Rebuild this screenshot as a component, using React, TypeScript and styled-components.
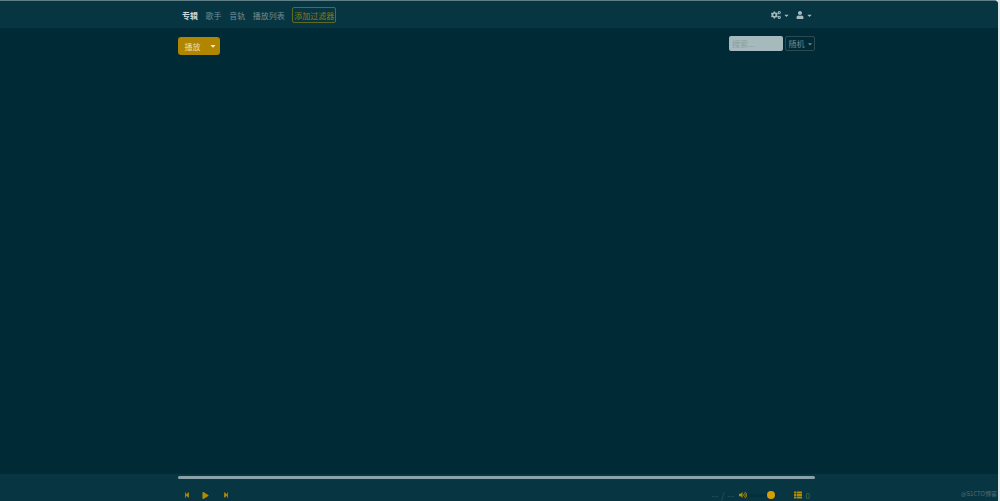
import styled, { createGlobalStyle } from "styled-components";
import { FaCaretDown, FaCogs, FaPlay, FaStepBackward, FaStepForward, FaThList, FaUser, FaVolumeUp } from "react-icons/fa";

const GlobalStyle = createGlobalStyle`
  html, body {
    margin: 0;
    height: 100%;
    background: #dfe9ec;
    overflow: hidden;
  }
  * {
    box-sizing: border-box;
  }
`;

const Shell = styled.div`
  width: 998px;
  height: 501px;
  display: flex;
  flex-direction: column;
  background: #002b36;
  border-top: 1px solid #5f7e86;
  border-top-right-radius: 4px;
  overflow: hidden;
  font-family: "Noto Sans CJK SC", "Noto Sans", sans-serif;
  font-size: 8px;
`;

const Navbar = styled.nav`
  height: 27px;
  padding: 1px 185px 0 182px;
  display: flex;
  align-items: center;
  background: #073642;
`;

const NavLink = styled.span<{ $active?: boolean }>`
  margin-right: 7.6px;
  color: ${({ $active }) => ($active ? "#ccd8da" : "#6f8c93")};
  font-weight: ${({ $active }) => ($active ? 700 : 400)};
`;

const FilterButton = styled.button`
  height: 16px;
  width: 44px;
  margin-left: -0.2px;
  padding: 0;
  border: 1px solid #5f6a22;
  border-radius: 2px;
  background: transparent;
  color: #8a7c16;
  font: inherit;
`;

const NavRight = styled.div`
  margin-left: auto;
  display: flex;
  align-items: center;
  gap: 6px;
  color: #a7bbbf;
`;

const NavMenu = styled.span`
  display: flex;
  align-items: center;
  gap: 2px;
`;

const Main = styled.main`
  flex: 1;
  padding: 8px 183px 0 178px;
`;

const Toolbar = styled.div`
  display: flex;
  align-items: flex-start;
  justify-content: space-between;
`;

const SplitButton = styled.div`
  width: 42px;
  height: 18px;
  margin-top: 1px;
  display: flex;
  border-radius: 3px;
  overflow: hidden;
  background: #b08600;
  color: #e8dcae;
  box-shadow: 0 0 1px rgba(0, 0, 0, 0.4);
`;

const PlayLabel = styled.span`
  width: 28px;
  padding: 1px 0 0 1px;
  text-align: center;
  line-height: 18px;
`;

const CaretBox = styled.span`
  flex: 1;
  display: flex;
  align-items: center;
  justify-content: center;
  color: #f4e9c4;
`;

const ToolbarRight = styled.div`
  display: flex;
  align-items: center;
  gap: 2px;
`;

const SearchBox = styled.input`
  width: 54px;
  height: 15px;
  margin-left: 1px;
  padding: 0 3px;
  border: 0;
  border-radius: 2px;
  background: #a6b9bc;
  font: inherit;
  &::placeholder {
    color: #8a9ea2;
    opacity: 1;
  }
`;

const SortButton = styled.span`
  width: 30px;
  height: 15px;
  display: flex;
  align-items: center;
  justify-content: center;
  gap: 2px;
  padding-left: 1px;
  border: 1px solid #2c4a52;
  border-radius: 2px;
  color: #6f8c93;
`;

const Player = styled.footer`
  height: 27px;
  padding: 2px 183px 0 178px;
  position: relative;
  background: #073642;
`;

const Progress = styled.div`
  height: 3px;
  border-radius: 2px;
  background: #8aa3a8;
`;

const Controls = styled.div`
  display: flex;
  align-items: center;
  height: 20px;
  margin-top: 6px;
  color: #b58900;
`;

const TransportIcon = styled.span<{ $gap: number }>`
  display: flex;
  margin-left: ${({ $gap }) => $gap}px;
`;

const Time = styled.span`
  margin-left: auto;
  width: 20px;
  white-space: nowrap;
  color: #35555d;
  font-size: 9px;
  letter-spacing: 0.4px;
`;

const VolumeTrack = styled.div`
  width: 29px;
  height: 3px;
  margin: 0 17px 0 1px;
  position: relative;
  background: #05303b;
`;

const VolumeKnob = styled.span`
  position: absolute;
  top: -3px;
  left: 19px;
  width: 8px;
  height: 8px;
  border-radius: 50%;
  background: #d69e07;
`;

const QueueCount = styled.span`
  margin: 0 5px 0 4px;
  color: #4f6a3f;
`;

const Watermark = styled.span`
  position: absolute;
  right: 1px;
  bottom: 3px;
  color: #4f6e76;
  font-size: 6px;
`;

export default function App() {
  return (
    <>
      <GlobalStyle />
      <Shell>
        <Navbar>
          <NavLink $active>专辑</NavLink>
          <NavLink>歌手</NavLink>
          <NavLink>音轨</NavLink>
          <NavLink>播放列表</NavLink>
          <FilterButton>添加过滤器</FilterButton>
          <NavRight>
            <NavMenu>
              <FaCogs size={10} />
              <FaCaretDown size={7} />
            </NavMenu>
            <NavMenu>
              <FaUser size={8} />
              <FaCaretDown size={7} />
            </NavMenu>
          </NavRight>
        </Navbar>
        <Main>
          <Toolbar>
            <SplitButton>
              <PlayLabel>播放</PlayLabel>
              <CaretBox>
                <FaCaretDown size={8} />
              </CaretBox>
            </SplitButton>
            <ToolbarRight>
              <SearchBox placeholder="搜索..." />
              <SortButton>
                随机
                <FaCaretDown size={6} />
              </SortButton>
            </ToolbarRight>
          </Toolbar>
        </Main>
        <Player>
          <Progress />
          <Controls>
            <TransportIcon $gap={6}>
              <FaStepBackward size={6} />
            </TransportIcon>
            <TransportIcon $gap={12}>
              <FaPlay size={7} />
            </TransportIcon>
            <TransportIcon $gap={14}>
              <FaStepForward size={6} />
            </TransportIcon>
            <Time>-- / --</Time>
            <TransportIcon $gap={7}>
              <FaVolumeUp size={8} />
            </TransportIcon>
            <VolumeTrack>
              <VolumeKnob />
            </VolumeTrack>
            <FaThList size={8} />
            <QueueCount>0</QueueCount>
          </Controls>
          <Watermark>@51CTO博客</Watermark>
        </Player>
      </Shell>
    </>
  );
}
